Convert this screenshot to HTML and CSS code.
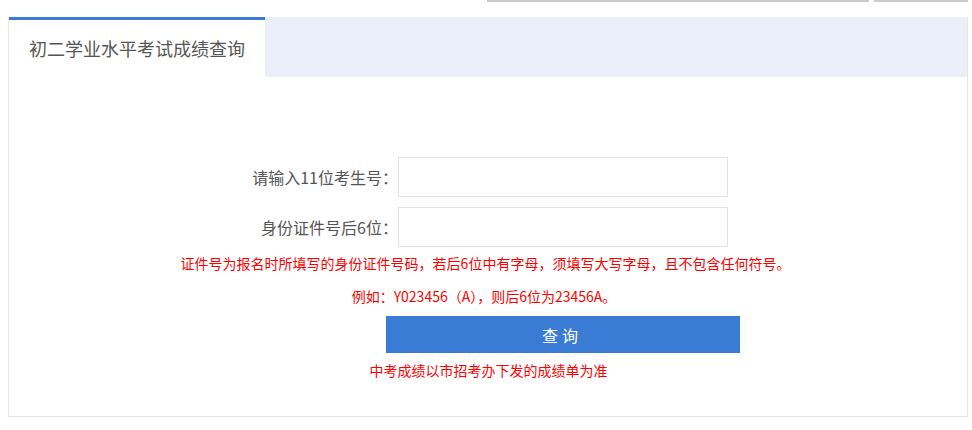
FILE: index.html
```html
<!DOCTYPE html>
<html lang="zh-CN">
<head>
    <meta charset="utf-8">
    <title>初二学业水平考试成绩查询</title>
    <link rel="stylesheet" href="styles.css">
</head>
<body>

    <div class="top-strip">
        <div class="strip-search"></div>
        <div class="strip-btn"></div>
    </div>

    <div class="panel">
        <div class="panel-head">
            <div class="tab">初二学业水平考试成绩查询</div>
            <div class="tab-rest"></div>
        </div>

        <div class="panel-body">
            <form class="query-form" onsubmit="return false;">
                <div class="form-row">
                    <label class="form-label" for="ksh">请输入11位考生号：</label>
                    <input class="form-input" type="text" id="ksh" maxlength="11">
                </div>
                <div class="form-row">
                    <label class="form-label" for="sfz">身份证件号后6位：</label>
                    <input class="form-input" type="text" id="sfz" maxlength="6">
                </div>

                <p class="tip tip-first">证件号为报名时所填写的身份证件号码，若后6位中有字母，须填写大写字母，且不包含任何符号。</p>
                <p class="tip tip-example">例如：Y023456（A），则后6位为23456A。</p>

                <button class="query-button" type="submit">查询</button>

                <p class="tip tip-note">中考成绩以市招考办下发的成绩单为准</p>
            </form>
        </div>
    </div>

</body>
</html>
```

FILE: styles.css
```css
body{
    margin: 0;
    font-family: "Microsoft YaHei", "Noto Sans CJK SC", sans-serif;
    color: #555;
    background-color: #fff;
}
p{
    margin: 0;
}
.top-strip{
    display: flex;
    height: 2px;
    padding-left: 487px;
    column-gap: 5px;
}
.strip-search{
    width: 382px;
    background-color: #c9c9c9;
}
.strip-btn{
    width: 94px;
    background-color: #c9c9c9;
}
.panel{
    width: 958px;
    margin-top: 15px;
    margin-left: 8px;
    border: 1px solid #e6e6e6;
    border-top: none;
}
.panel-head{
    display: flex;
    height: 60px;
    background-color: #eaeff9;
}
.tab{
    width: 216px;
    padding: 0 20px;
    background-color: #fff;
    border-top: 3px solid #3a7bd5;
    font-size: 18px;
    line-height: 57px;
    white-space: nowrap;
}
.tab-rest{
    flex: 1;
}
.panel-body{
    padding-top: 80px;
    padding-bottom: 36px;
}
.query-form{
    display: flex;
    flex-direction: column;
}
.form-row{
    display: flex;
    align-items: center;
    margin-bottom: 10px;
    padding-left: 150px;
}
.form-label{
    width: 239px;
    text-align: right;
    font-size: 16px;
    white-space: nowrap;
}
.form-input{
    box-sizing: border-box;
    width: 330px;
    height: 40px;
    margin: 0;
    border: 1px solid #e3e3e3;
    outline: none;
    padding: 0 10px;
    font-size: 16px;
}
.tip{
    color: #f00;
    font-size: 14px;
    line-height: 20px;
    text-align: center;
    white-space: nowrap;
}
.tip-first{
    margin-top: -4px;
    padding-right: 5px;
}
.tip-example{
    margin-top: 13px;
    padding-right: 8px;
}
.query-button{
    width: 354px;
    height: 37px;
    margin: 10px 0 0 377px;
    border: none;
    background-color: #3a7bd5;
    color: #fff;
    font-family: inherit;
    font-size: 16px;
    letter-spacing: 4px;
    padding-left: 4px;
    cursor: pointer;
}
.tip-note{
    margin-top: 7px;
    padding-left: 1px;
}
```
